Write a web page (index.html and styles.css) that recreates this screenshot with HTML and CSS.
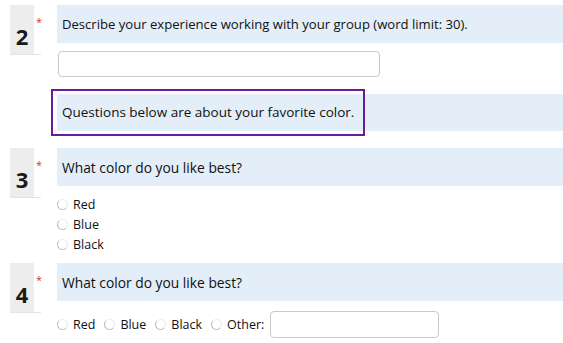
FILE: index.html
```html
<!DOCTYPE html>
<html>
<head>
<meta charset="utf-8">
<link rel="stylesheet" href="styles.css">
</head>
<body>
<div class="form">
  <div class="question q2">
    <div class="numcol"><div class="num">2</div><span class="req">*</span></div>
    <div class="content">
      <div class="header small">Describe your experience working with your group (word limit: 30).</div>
      <input class="text-input wide" type="text">
    </div>
  </div>

  <div class="section">
    <div class="section-header"><span class="focus">Questions below are about your favorite color.</span></div>
  </div>

  <div class="question q3">
    <div class="numcol"><div class="num">3</div><span class="req">*</span></div>
    <div class="content">
      <div class="header">What color do you like best?</div>
      <div class="options vertical">
        <label class="opt"><span class="radio"></span>Red</label>
        <label class="opt"><span class="radio"></span>Blue</label>
        <label class="opt"><span class="radio"></span>Black</label>
      </div>
    </div>
  </div>

  <div class="question q4">
    <div class="numcol"><div class="num">4</div><span class="req">*</span></div>
    <div class="content">
      <div class="header">What color do you like best?</div>
      <div class="options horizontal">
        <label class="opt"><span class="radio"></span>Red</label>
        <label class="opt"><span class="radio"></span>Blue</label>
        <label class="opt"><span class="radio"></span>Black</label>
        <label class="opt"><span class="radio"></span>Other:</label>
        <input class="text-input other" type="text">
      </div>
    </div>
  </div>
</div>
</body>
</html>
```

FILE: styles.css
```css
html, body {
  margin: 0;
  padding: 0;
  background: #fff;
}
body {
  font-family: "Open Sans", "DejaVu Sans", sans-serif;
  color: #111;
}
.form {
  padding-top: 5px;
}
.question {
  display: flex;
  align-items: flex-start;
}
.numcol {
  position: relative;
  margin-left: 10px;
  width: 31px;
  border-bottom: 1px solid #e4e4e4;
  flex: none;
}
.num {
  width: 24px;
  height: 49px;
  background: #ededed;
  font-weight: 700;
  font-size: 22px;
  line-height: 22px;
  text-align: center;
  box-sizing: border-box;
  padding-top: 20px;
  color: #1a1a1a;
}
.req {
  position: absolute;
  left: 26px;
  top: 11px;
  color: #e0303a;
  font-size: 11px;
  line-height: 11px;
}
.content {
  margin-left: 16px;
  flex: 1;
}
.header {
  background: #e3eef9;
  height: 38px;
  display: flex;
  align-items: center;
  padding-left: 5px;
  font-size: 13.8px;
}
.header.small {
  font-size: 13.1px;
}
.text-input {
  display: block;
  box-sizing: border-box;
  border: 1px solid #c9c9c9;
  border-radius: 4px;
  background: #fff;
  height: 26px;
  padding: 0;
  margin: 0;
  outline: none;
}
.text-input.wide {
  width: 322px;
  margin: 8px 0 0 1px;
}
.section {
  margin: 17px 0 0 57px;
}
.section-header {
  background: #e3eef9;
  height: 37px;
  display: flex;
  align-items: center;
  font-size: 13.5px;
}
.focus {
  display: block;
  white-space: nowrap;
  margin-left: -1px;
  padding: 9px 6px 10px 6px;
  outline: 2px solid #6a1b9a;
  outline-offset: 3px;
}
.q3 {
  margin-top: 17px;
}
.q4 {
  margin-top: 9px;
}
.options {
  font-size: 12.5px;
}
.options.vertical {
  padding-top: 8px;
  display: flex;
  flex-direction: column;
}
.options.vertical .opt {
  height: 20px;
}
.opt {
  display: flex;
  align-items: center;
}
.radio {
  display: inline-block;
  width: 11px;
  height: 11px;
  box-sizing: border-box;
  border-radius: 50%;
  border: 1px solid #ececec;
  border-left-color: #b9b9b9;
  border-bottom-color: #c4c4c4;
  margin: 0 5px 0 0;
  flex: none;
}
.options.horizontal {
  display: flex;
  align-items: center;
  padding-top: 10px;
}
.options.horizontal .opt {
  margin-right: 9px;
}
.options.horizontal .opt:last-of-type {
  margin-right: 6px;
}
.text-input.other {
  width: 169px;
  height: 27px;
}
```
